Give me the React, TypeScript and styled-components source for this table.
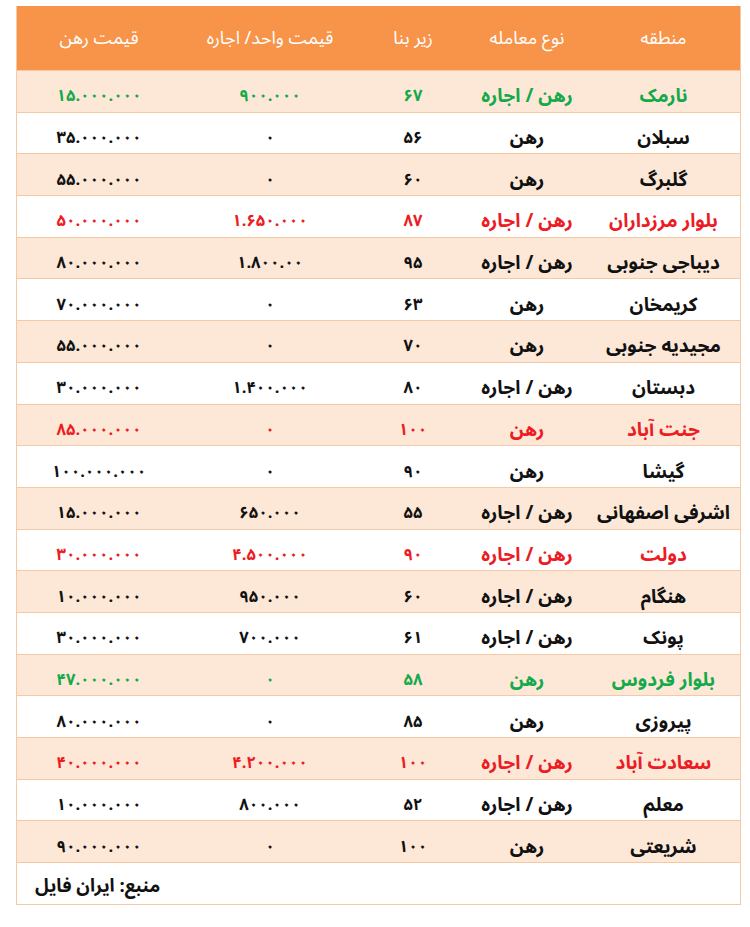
import React from 'react';
import styled, { createGlobalStyle } from 'styled-components';

const GlobalStyle = createGlobalStyle`
  body {
    margin: 0;
    background: #fff;
    font-family: "Noto Sans Arabic", "DejaVu Sans", "Noto Sans", sans-serif;
  }
`;

type Tone = 'normal' | 'green' | 'red';

const rows: { area: string; deal: string; size: string; unit: string; rahn: string; tone: Tone }[] = [
  { area: 'نارمک', deal: 'رهن / اجاره', size: '۶۷', unit: '۹۰۰.۰۰۰', rahn: '۱۵.۰۰۰.۰۰۰', tone: 'green' },
  { area: 'سبلان', deal: 'رهن', size: '۵۶', unit: '۰', rahn: '۳۵.۰۰۰.۰۰۰', tone: 'normal' },
  { area: 'گلبرگ', deal: 'رهن', size: '۶۰', unit: '۰', rahn: '۵۵.۰۰۰.۰۰۰', tone: 'normal' },
  { area: 'بلوار مرزداران', deal: 'رهن / اجاره', size: '۸۷', unit: '۱.۶۵۰.۰۰۰', rahn: '۵۰.۰۰۰.۰۰۰', tone: 'red' },
  { area: 'دیباجی جنوبی', deal: 'رهن / اجاره', size: '۹۵', unit: '۱.۸۰۰.۰۰', rahn: '۸۰.۰۰۰.۰۰۰', tone: 'normal' },
  { area: 'کریمخان', deal: 'رهن', size: '۶۳', unit: '۰', rahn: '۷۰.۰۰۰.۰۰۰', tone: 'normal' },
  { area: 'مجیدیه جنوبی', deal: 'رهن', size: '۷۰', unit: '۰', rahn: '۵۵.۰۰۰.۰۰۰', tone: 'normal' },
  { area: 'دبستان', deal: 'رهن / اجاره', size: '۸۰', unit: '۱.۴۰۰.۰۰۰', rahn: '۳۰.۰۰۰.۰۰۰', tone: 'normal' },
  { area: 'جنت آباد', deal: 'رهن', size: '۱۰۰', unit: '۰', rahn: '۸۵.۰۰۰.۰۰۰', tone: 'red' },
  { area: 'گیشا', deal: 'رهن', size: '۹۰', unit: '۰', rahn: '۱۰۰.۰۰۰.۰۰۰', tone: 'normal' },
  { area: 'اشرفی اصفهانی', deal: 'رهن / اجاره', size: '۵۵', unit: '۶۵۰.۰۰۰', rahn: '۱۵.۰۰۰.۰۰۰', tone: 'normal' },
  { area: 'دولت', deal: 'رهن / اجاره', size: '۹۰', unit: '۴.۵۰۰.۰۰۰', rahn: '۳۰.۰۰۰.۰۰۰', tone: 'red' },
  { area: 'هنگام', deal: 'رهن / اجاره', size: '۶۰', unit: '۹۵۰.۰۰۰', rahn: '۱۰.۰۰۰.۰۰۰', tone: 'normal' },
  { area: 'پونک', deal: 'رهن / اجاره', size: '۶۱', unit: '۷۰۰.۰۰۰', rahn: '۳۰.۰۰۰.۰۰۰', tone: 'normal' },
  { area: 'بلوار فردوس', deal: 'رهن', size: '۵۸', unit: '۰', rahn: '۴۷.۰۰۰.۰۰۰', tone: 'green' },
  { area: 'پیروزی', deal: 'رهن', size: '۸۵', unit: '۰', rahn: '۸۰.۰۰۰.۰۰۰', tone: 'normal' },
  { area: 'سعادت آباد', deal: 'رهن / اجاره', size: '۱۰۰', unit: '۴.۲۰۰.۰۰۰', rahn: '۴۰.۰۰۰.۰۰۰', tone: 'red' },
  { area: 'معلم', deal: 'رهن / اجاره', size: '۵۲', unit: '۸۰۰.۰۰۰', rahn: '۱۰.۰۰۰.۰۰۰', tone: 'normal' },
  { area: 'شریعتی', deal: 'رهن', size: '۱۰۰', unit: '۰', rahn: '۹۰.۰۰۰.۰۰۰', tone: 'normal' },
];

const toneColor: Record<Tone, string> = {
  normal: '#111',
  green: '#14a94a',
  red: '#ec1c24',
};

export default function App() {
  return (
    <>
      <GlobalStyle />
      <Page>
        <Table>
          <HeadRow>
            <HeadCell>منطقه</HeadCell>
            <HeadCell>نوع معامله</HeadCell>
            <HeadCell>زیر بنا</HeadCell>
            <HeadCell>قیمت واحد/ اجاره</HeadCell>
            <HeadCell>قیمت رهن</HeadCell>
          </HeadRow>
          {rows.map((r, i) => (
            <Row key={i} shaded={i % 2 === 0} tone={r.tone}>
              <Cell>{r.area}</Cell>
              <Cell>{r.deal}</Cell>
              <Cell numeric>{r.size}</Cell>
              <Cell numeric>{r.unit}</Cell>
              <Cell numeric>{r.rahn}</Cell>
            </Row>
          ))}
          <Footer>منبع: ایران فایل</Footer>
        </Table>
      </Page>
    </>
  );
}

const Page = styled.div`
  padding: 6px 0 0 16px;
`;

const Table = styled.div`
  width: 725px;
  direction: rtl;
  border-left: 1px solid #f6c9a5;
  border-right: 1px solid #f6c9a5;
  box-sizing: border-box;
`;

const cols = '153px 120px 108px 178px 164px';

const HeadRow = styled.div`
  display: grid;
  grid-template-columns: ${cols};
  height: 64px;
  background: #f7944a;
  align-items: center;
`;

const HeadCell = styled.div`
  color: #fff;
  font-size: 18px;
  text-align: center;
`;

const Row = styled.div<{ shaded: boolean; tone: Tone }>`
  display: grid;
  grid-template-columns: ${cols};
  height: 41.7px;
  box-sizing: border-box;
  border-top: 1px solid #f6c9a5;
  align-items: center;
  background: ${p => (p.shaded ? '#fde8d8' : '#fff')};
  color: ${p => toneColor[p.tone]};
`;

const Cell = styled.div<{ numeric?: boolean }>`
  font-size: ${p => (p.numeric ? '16.5px' : '19px')};
  line-height: 26px;
  padding-top: 10px;
  font-weight: bold;
  text-align: center;
`;

const Footer = styled.div`
  height: 43px;
  box-sizing: border-box;
  border-top: 1px solid #f6c9a5;
  border-bottom: 1px solid #f6c9a5;
  display: flex;
  align-items: center;
  direction: ltr;
  padding: 5px 0 0 18px;
  font-size: 18.5px;
  font-weight: bold;
  color: #111;
`;
